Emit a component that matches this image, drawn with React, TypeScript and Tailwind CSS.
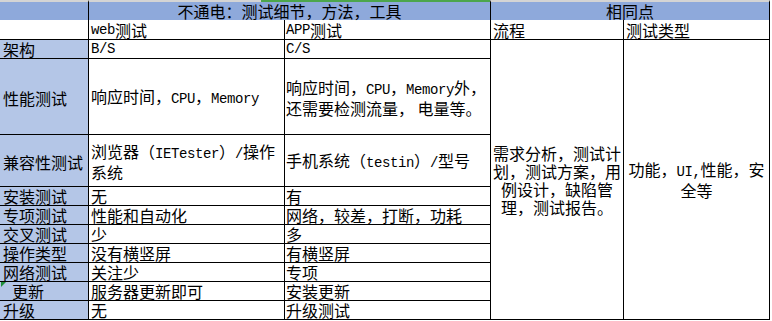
import type { ReactNode } from "react";

// half-width latin runs, like SimSun's 8px latin glyphs
const E = ({ children }: { children: ReactNode }) => (
  <span className="font-['Liberation_Mono',monospace] text-[14px] tracking-[-0.4px]">{children}</span>
);

const cell = "flex whitespace-nowrap border-r border-b border-black leading-[18px]";
const label = `${cell} bg-[#b4c6e7] pl-[3px]`;

const rows: { name: ReactNode; web: ReactNode; app: ReactNode; indent?: boolean }[] = [
  { name: "安装测试", web: "无", app: "有" },
  { name: "专项测试", web: "性能和自动化", app: "网络，较差，打断，功耗" },
  { name: "交叉测试", web: "少", app: "多" },
  { name: "操作类型", web: "没有横竖屏", app: "有横竖屏" },
  { name: "网络测试", web: "关注少", app: "专项" },
  { name: "更新", web: "服务器更新即可", app: "安装更新", indent: true },
  { name: "升级", web: "无", app: "升级测试" },
];

export default function App() {
  return (
    <div className="h-[321px] w-[772px] bg-white font-['Noto_Sans_CJK_SC',sans-serif] text-[16px] text-black">
      <div className="grid grid-cols-[89px_196px_206px_133px_146px] grid-rows-[20px_20px_19px_76px_52px_repeat(7,19px)]">
        {/* header */}
        <div className="border-r border-t-2 border-black border-t-[#d4d4d4] bg-[#8ea9db]" />
        <div className="relative col-span-2 flex items-end justify-center border-r border-t-2 border-black border-t-[#d4d4d4] bg-[#8ea9db] leading-[18px]">
          <div className="absolute -top-[2px] left-[172px] right-0 h-[2px] bg-[#4ca64c]" />
          不通电：测试细节，方法，工具
        </div>
        <div className="col-span-2 flex items-end justify-center border-r border-t-2 border-black border-t-[#d4d4d4] bg-[#8ea9db] leading-[18px]">
          相同点
        </div>

        {/* merged right-hand cells */}
        <div className={`${cell} col-start-4 row-start-3 row-span-10 items-center justify-center text-center`}>
          <div>
            需求分析，测试计
            <br />
            划，测试方案，用
            <br />
            例设计，缺陷管
            <br />
            理，测试报告。
          </div>
        </div>
        <div className={`${cell} col-start-5 row-start-3 row-span-10 items-center justify-center text-center`}>
          <div>
            功能，<E>UI,</E>性能，安
            <br />
            全等
          </div>
        </div>

        {/* row 1 */}
        <div className={`${cell} bg-white`} />
        <div className={`${cell} items-end pl-[2px]`}>
          <E>web</E>测试
        </div>
        <div className={`${cell} items-end pl-[1px]`}>
          <E>APP</E>测试
        </div>
        <div className={`${cell} items-end pl-[2px]`}>流程</div>
        <div className={`${cell} items-end pl-[2px]`}>测试类型</div>

        {/* row 2 */}
        <div className={`${label} items-end`}>架构</div>
        <div className={`${cell} items-end pl-[2px]`}>
          <E>B/S</E>
        </div>
        <div className={`${cell} items-end pl-[1px]`}>
          <E>C/S</E>
        </div>

        {/* performance */}
        <div className={`${label} items-center pt-[2px]`}>性能测试</div>
        <div className={`${cell} items-center pl-[2px] pt-[2px]`}>
          <span>
            响应时间，<E>CPU</E>，<E>Memory</E>
          </span>
        </div>
        <div className={`${cell} items-center pl-[1px] pt-[2px]`}>
          <div>
            响应时间，<E>CPU</E>，<E>Memory</E>外，
            <br />
            还需要检测流量， 电量等。
          </div>
        </div>

        {/* compatibility */}
        <div className={`${label} items-center pt-[2px]`}>兼容性测试</div>
        <div className={`${cell} items-center pl-[2px] pt-[2px]`}>
          <div>
            浏览器（<E>IETester</E>）<E>/</E>操作
            <br />
            系统
          </div>
        </div>
        <div className={`${cell} items-center pl-[1px] pt-[2px]`}>
          <span>
            手机系统（<E>testin</E>）<E>/</E>型号
          </span>
        </div>

        {rows.map((r, i) => (
          <div key={i} className="contents">
            <div className={`${label} relative items-end ${r.indent ? "pl-[12px]" : ""}`}>
              {r.indent && (
                <div className="absolute left-[1px] top-0 h-0 w-0 border-r-[5px] border-t-[5px] border-r-transparent border-t-[#1f8f3a]" />
              )}
              {r.name}
            </div>
            <div className={`${cell} items-end pl-[2px]`}>{r.web}</div>
            <div className={`${cell} items-end pl-[1px]`}>{r.app}</div>
          </div>
        ))}
      </div>
    </div>
  );
}
